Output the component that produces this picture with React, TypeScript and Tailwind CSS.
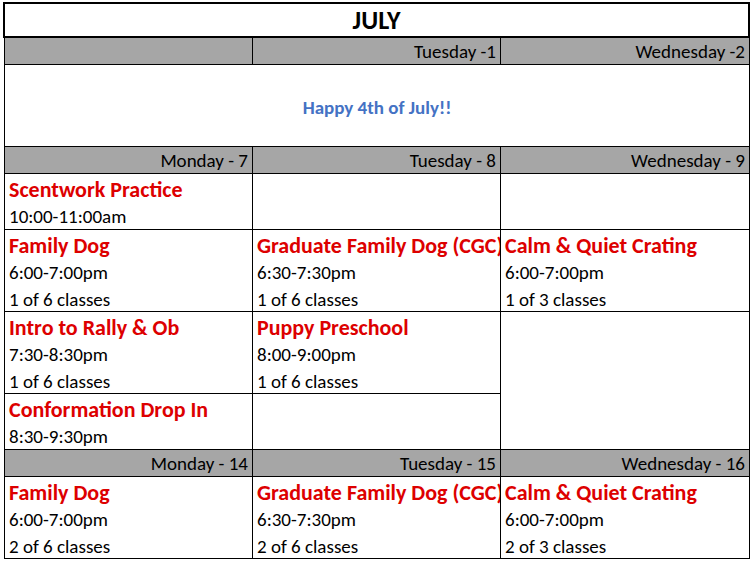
const font = { fontFamily: "Carlito, Calibri, Lato, 'Liberation Sans', sans-serif" };

type ClassItem = { name: string; lines: string[] };

function Header({ label }: { label: string }) {
  return (
    <div className="h-[27px] border-r border-b border-black bg-[#a6a6a6] pr-[4px] text-right text-[19px] leading-[27px] text-black">
      {label}
    </div>
  );
}

function Cell({ item, span }: { item?: ClassItem; span?: boolean }) {
  return (
    <div
      className={
        "overflow-hidden whitespace-nowrap border-r border-b border-black bg-white pl-[4px] pt-[2px] " +
        (span ? "row-span-2" : "")
      }
    >
      {item && (
        <>
          <div className="text-[22px] font-bold leading-[27px] text-[#dd0000]">{item.name}</div>
          {item.lines.map((l) => (
            <div key={l} className="text-[19px] leading-[27px] text-black">
              {l}
            </div>
          ))}
        </>
      )}
    </div>
  );
}

export default function App() {
  return (
    <div className="h-[561px] w-[753px] bg-white pl-[3px] pt-[2px]" style={font}>
      <div className="flex h-[36px] w-[747px] items-center justify-center border-2 border-black pt-[1px] text-[26px] font-bold text-black">
        JULY
      </div>
      <div className="ml-[1px] grid w-[746px] grid-cols-[248px_248px_249px] grid-rows-[27px_82px_27px_56px_82px_82px_56px_27px_82px] border-l border-black">
        <Header label="" />
        <Header label="Tuesday -1" />
        <Header label="Wednesday -2" />
        <div className="col-span-3 flex items-center justify-center border-r border-b border-black pt-[5px] text-[19px] font-bold text-[#4472c4]">
          Happy 4th of July!!
        </div>
        <Header label="Monday - 7" />
        <Header label="Tuesday - 8" />
        <Header label="Wednesday - 9" />
        <Cell item={{ name: "Scentwork Practice", lines: ["10:00-11:00am"] }} />
        <Cell />
        <Cell />
        <Cell item={{ name: "Family Dog", lines: ["6:00-7:00pm", "1 of 6 classes"] }} />
        <Cell item={{ name: "Graduate Family Dog (CGC)", lines: ["6:30-7:30pm", "1 of 6 classes"] }} />
        <Cell item={{ name: "Calm & Quiet Crating", lines: ["6:00-7:00pm", "1 of 3 classes"] }} />
        <Cell item={{ name: "Intro to Rally & Ob", lines: ["7:30-8:30pm", "1 of 6 classes"] }} />
        <Cell item={{ name: "Puppy Preschool", lines: ["8:00-9:00pm", "1 of 6 classes"] }} />
        <Cell span />
        <Cell item={{ name: "Conformation Drop In", lines: ["8:30-9:30pm"] }} />
        <Cell />
        <Header label="Monday - 14" />
        <Header label="Tuesday - 15" />
        <Header label="Wednesday - 16" />
        <Cell item={{ name: "Family Dog", lines: ["6:00-7:00pm", "2 of 6 classes"] }} />
        <Cell item={{ name: "Graduate Family Dog (CGC)", lines: ["6:30-7:30pm", "2 of 6 classes"] }} />
        <Cell item={{ name: "Calm & Quiet Crating", lines: ["6:00-7:00pm", "2 of 3 classes"] }} />
      </div>
    </div>
  );
}
